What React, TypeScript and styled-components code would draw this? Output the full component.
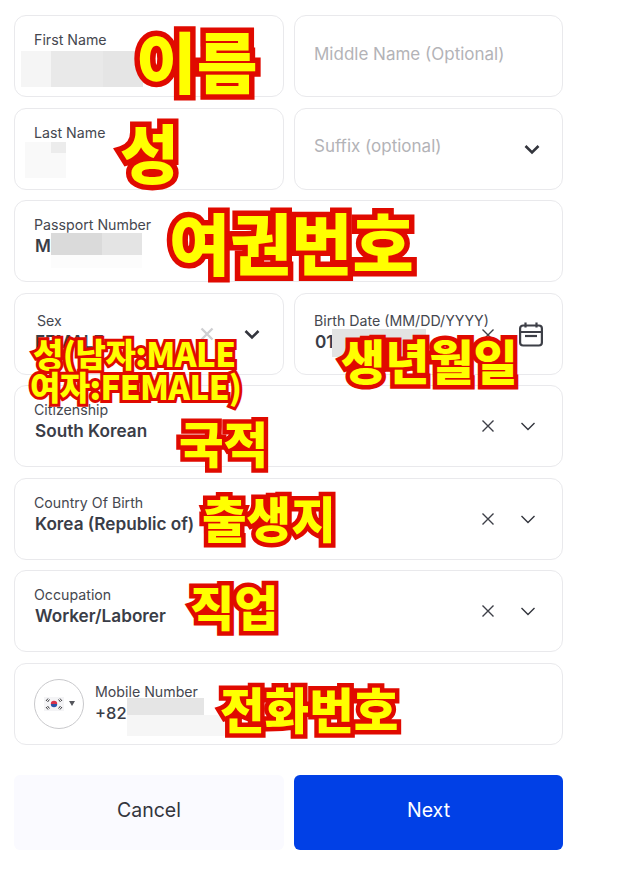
import React from 'react';
import styled, { createGlobalStyle } from 'styled-components';

const GlobalStyle = createGlobalStyle`
  html, body {
    margin: 0;
    padding: 0;
    background: #fff;
  }
  body {
    font-family: Inter, "Liberation Sans", sans-serif;
    color: #33353d;
  }
`;

const Page = styled.div`
  position: relative;
  width: 618px;
  height: 871px;
  overflow: hidden;
  padding: 15px 0 0 14px;
  box-sizing: border-box;
`;

const Form = styled.div`
  width: 549px;
  display: flex;
  flex-direction: column;
  gap: 10.5px;
`;

const Row = styled.div`
  display: grid;
  grid-template-columns: 270px 269px;
  column-gap: 10px;
`;

const Field = styled.div`
  position: relative;
  box-sizing: border-box;
  height: 82px;
  border: 1px solid #e9e9ec;
  border-radius: 12px;
  background: #fff;
  padding: 0 ${(p) => p.$right ?? 26}px 0 19px;
  display: flex;
  align-items: flex-start;
  justify-content: space-between;
`;

const Texts = styled.div`
  display: flex;
  flex-direction: column;
  padding-top: ${(p) => p.$top ?? 15}px;
  min-width: 0;
`;

const Label = styled.div`
  font-size: 14.2px;
  line-height: 18px;
  color: #45474f;
  white-space: nowrap;
  margin-left: ${(p) => p.$indent ?? 0}px;
`;

const Value = styled.div`
  font-size: 17.2px;
  line-height: 24px;
  font-weight: 600;
  color: #3a3d47;
  white-space: nowrap;
  margin-left: 1px;
`;

const Placeholder = styled.div`
  font-size: 17px;
  line-height: 24px;
  color: #b3b3b7;
  padding-top: ${(p) => p.$top ?? 26}px;
  white-space: nowrap;
`;

const Controls = styled.div`
  display: flex;
  align-items: center;
  gap: ${(p) => p.$gap ?? 24}px;
  padding-top: ${(p) => p.$top ?? 32}px;
`;

const Smudge = styled.div`
  position: absolute;
  left: ${(p) => p.$x}px;
  top: ${(p) => p.$y}px;
  width: ${(p) => p.$w}px;
  height: ${(p) => p.$h}px;
  background: ${(p) => p.$color};
`;

const PhoneField = styled(Field)`
  align-items: center;
  justify-content: flex-start;
  gap: 11px;
`;

const FlagButton = styled.div`
  box-sizing: border-box;
  width: 50px;
  height: 50px;
  border: 1px solid #c9c9cc;
  border-radius: 50%;
  display: flex;
  align-items: center;
  justify-content: center;
  gap: 5px;
  flex-shrink: 0;
`;

const Caret = styled.span`
  width: 0;
  height: 0;
  border-left: 3px solid transparent;
  border-right: 3px solid transparent;
  border-top: 5px solid #55565c;
`;

const PhoneTexts = styled.div`
  display: flex;
  flex-direction: column;
  padding-top: 1px;
`;

const PhoneValue = styled.div`
  font-size: 16.5px;
  line-height: 24px;
  font-weight: 500;
  color: #3a3d47;
`;

const Actions = styled.div`
  display: grid;
  grid-template-columns: 270px 269px;
  column-gap: 10px;
  margin-top: 19.5px;
`;

const Button = styled.button`
  height: 75px;
  border: none;
  border-radius: 6px;
  padding: 0 0 4px;
  font-family: inherit;
  font-size: 19.5px;
  font-weight: 400;
  background: ${(p) => (p.$primary ? '#0140e6' : '#fafaff')};
  color: ${(p) => (p.$primary ? '#fff' : '#33353d')};
`;

const Note = styled.div`
  position: absolute;
  left: ${(p) => p.$x}px;
  top: ${(p) => p.$y}px;
  font-family: "Noto Sans CJK KR", "Liberation Sans", sans-serif;
  font-size: ${(p) => p.$size}px;
  font-weight: 900;
  line-height: 1;
  letter-spacing: ${(p) => p.$track ?? 0}px;
  white-space: nowrap;
  color: #ffff00;
  -webkit-text-stroke: ${(p) => p.$stroke ?? 11}px #e00a00;
  paint-order: stroke fill;
`;

const CrossIcon = ({ color = '#3d3f47', width = 1.4, size = 16 }) => (
  <svg width={size} height={size} viewBox="0 0 16 16" fill="none" stroke={color} strokeWidth={width}>
    <path d="M2.5 2.5l11 11M13.5 2.5l-11 11" />
  </svg>
);

const ChevronIcon = ({ width = 1.4 }) => (
  <svg width="16" height="16" viewBox="0 0 16 16" fill="none" stroke="#33353d" strokeWidth={width}>
    <path d="M1.5 5l6.5 6.5L14.5 5" />
  </svg>
);

const CalendarIcon = () => (
  <svg width="24" height="26" viewBox="0 0 24 26" fill="none" stroke="#3d3f47" strokeWidth="2.2">
    <rect x="1.1" y="3.5" width="21.8" height="20" rx="3" />
    <path d="M1 10h22M6.5 .5v5M17.5 .5v5" />
    <path d="M6 14h12" />
  </svg>
);

const KoreaFlag = () => (
  <svg width="20" height="14" viewBox="0 0 20 14">
    <rect width="20" height="14" fill="#f4f4f6" />
    <path d="M6.8 7a3.2 3.2 0 0 1 6.4 0z" fill="#d8324a" />
    <path d="M6.8 7a3.2 3.2 0 0 0 6.4 0z" fill="#2a55a8" />
    <path d="M2 4l2-2.5M3.5 5l2-2.5M14.5 2.5l2 2.5M16 1.5l2 2.5M2 10l2 2.5M3.5 9l2 2.5M14.5 11.500l2-2.500M16 12.500l2-2.500" stroke="#3a3a3e" strokeWidth="1" />
  </svg>
);

const SelectField = ({ label, value }: { label: string; value: string }) => (
  <Field>
    <Texts>
      <Label>{label}</Label>
      <Value>{value}</Value>
    </Texts>
    <Controls>
      <CrossIcon />
      <ChevronIcon />
    </Controls>
  </Field>
);

const notes = [
  { text: '이름', x: 136, y: 26, size: 66 },
  { text: '성', x: 120, y: 118, size: 64 },
  { text: '여권번호', x: 169, y: 208, size: 66.5 },
  { text: '성(남자:MALE', x: 33, y: 337, size: 33, stroke: 6, track: -0.5 },
  { text: '여자:FEMALE)', x: 30, y: 370, size: 33, stroke: 6, track: -0.6 },
  { text: '생년월일', x: 341, y: 335, size: 48, stroke: 9 },
  { text: '국적', x: 179, y: 418, size: 48.5, stroke: 9 },
  { text: '출생지', x: 202, y: 493, size: 48.5, stroke: 9 },
  { text: '직업', x: 190, y: 581, size: 48, stroke: 9 },
  { text: '전화번호', x: 220, y: 684, size: 48.5, stroke: 9 },
];

export default function App() {
  return (
    <Page>
      <GlobalStyle />
      <Form>
        <Row>
          <Field>
            <Texts>
              <Label>First Name</Label>
            </Texts>
            <Smudge $x={6} $y={35} $w={30} $h={36} $color="#f5f5f5" />
            <Smudge $x={36} $y={35} $w={52} $h={36} $color="#e9e9e9" />
            <Smudge $x={88} $y={35} $w={40} $h={36} $color="#e5e5e5" />
          </Field>
          <Field>
            <Placeholder>Middle Name (Optional)</Placeholder>
          </Field>
        </Row>
        <Row>
          <Field>
            <Texts>
              <Label>Last Name</Label>
            </Texts>
            <Smudge $x={10} $y={33} $w={41} $h={36} $color="#f9f9f9" />
            <Smudge $x={36} $y={33} $w={15} $h={11} $color="#ececec" />
          </Field>
          <Field $right={22}>
            <Placeholder $top={25}>Suffix (optional)</Placeholder>
            <Controls>
              <ChevronIcon width={2.6} />
            </Controls>
          </Field>
        </Row>
        <Field>
          <Texts>
            <Label>Passport Number</Label>
            <Value>M</Value>
          </Texts>
          <Smudge $x={36} $y={32} $w={51} $h={22} $color="#dadada" />
          <Smudge $x={87} $y={32} $w={40} $h={22} $color="#e4e4e4" />
          <Smudge $x={36} $y={54} $w={91} $h={13} $color="#fcfcfc" />
        </Field>
        <Row>
          <Field $right={23}>
            <Texts $top={18}>
              <Label $indent={3}>Sex</Label>
              <Value>FEMALE</Value>
            </Texts>
            <Controls $gap={29}>
              <CrossIcon color="#cfcfd2" width={2.4} />
              <ChevronIcon width={2.6} />
            </Controls>
          </Field>
          <Field $right={19}>
            <Texts $top={18}>
              <Label>Birth Date (MM/DD/YYYY)</Label>
              <Value>01</Value>
            </Texts>
            <Smudge $x={37} $y={35} $w={94} $h={28} $color="#e3e3e3" />
            <Controls $gap={23} $top={28}>
              <CrossIcon />
              <CalendarIcon />
            </Controls>
          </Field>
        </Row>
        <SelectField label="Citizenship" value="South Korean" />
        <SelectField label="Country Of Birth" value="Korea (Republic of)" />
        <SelectField label="Occupation" value="Worker/Laborer" />
        <PhoneField>
          <FlagButton>
            <KoreaFlag />
            <Caret />
          </FlagButton>
          <PhoneTexts>
            <Label>Mobile Number</Label>
            <PhoneValue>+82</PhoneValue>
          </PhoneTexts>
          <Smudge $x={112} $y={34} $w={77} $h={17} $color="#e5e5e5" />
          <Smudge $x={112} $y={51} $w={98} $h={21} $color="#f6f6f6" />
        </PhoneField>
        <Actions>
          <Button>Cancel</Button>
          <Button $primary>Next</Button>
        </Actions>
      </Form>
      {notes.map((n) => (
        <Note key={n.text} $x={n.x} $y={n.y} $size={n.size} $stroke={n.stroke} $track={n.track}>
          {n.text}
        </Note>
      ))}
    </Page>
  );
}
